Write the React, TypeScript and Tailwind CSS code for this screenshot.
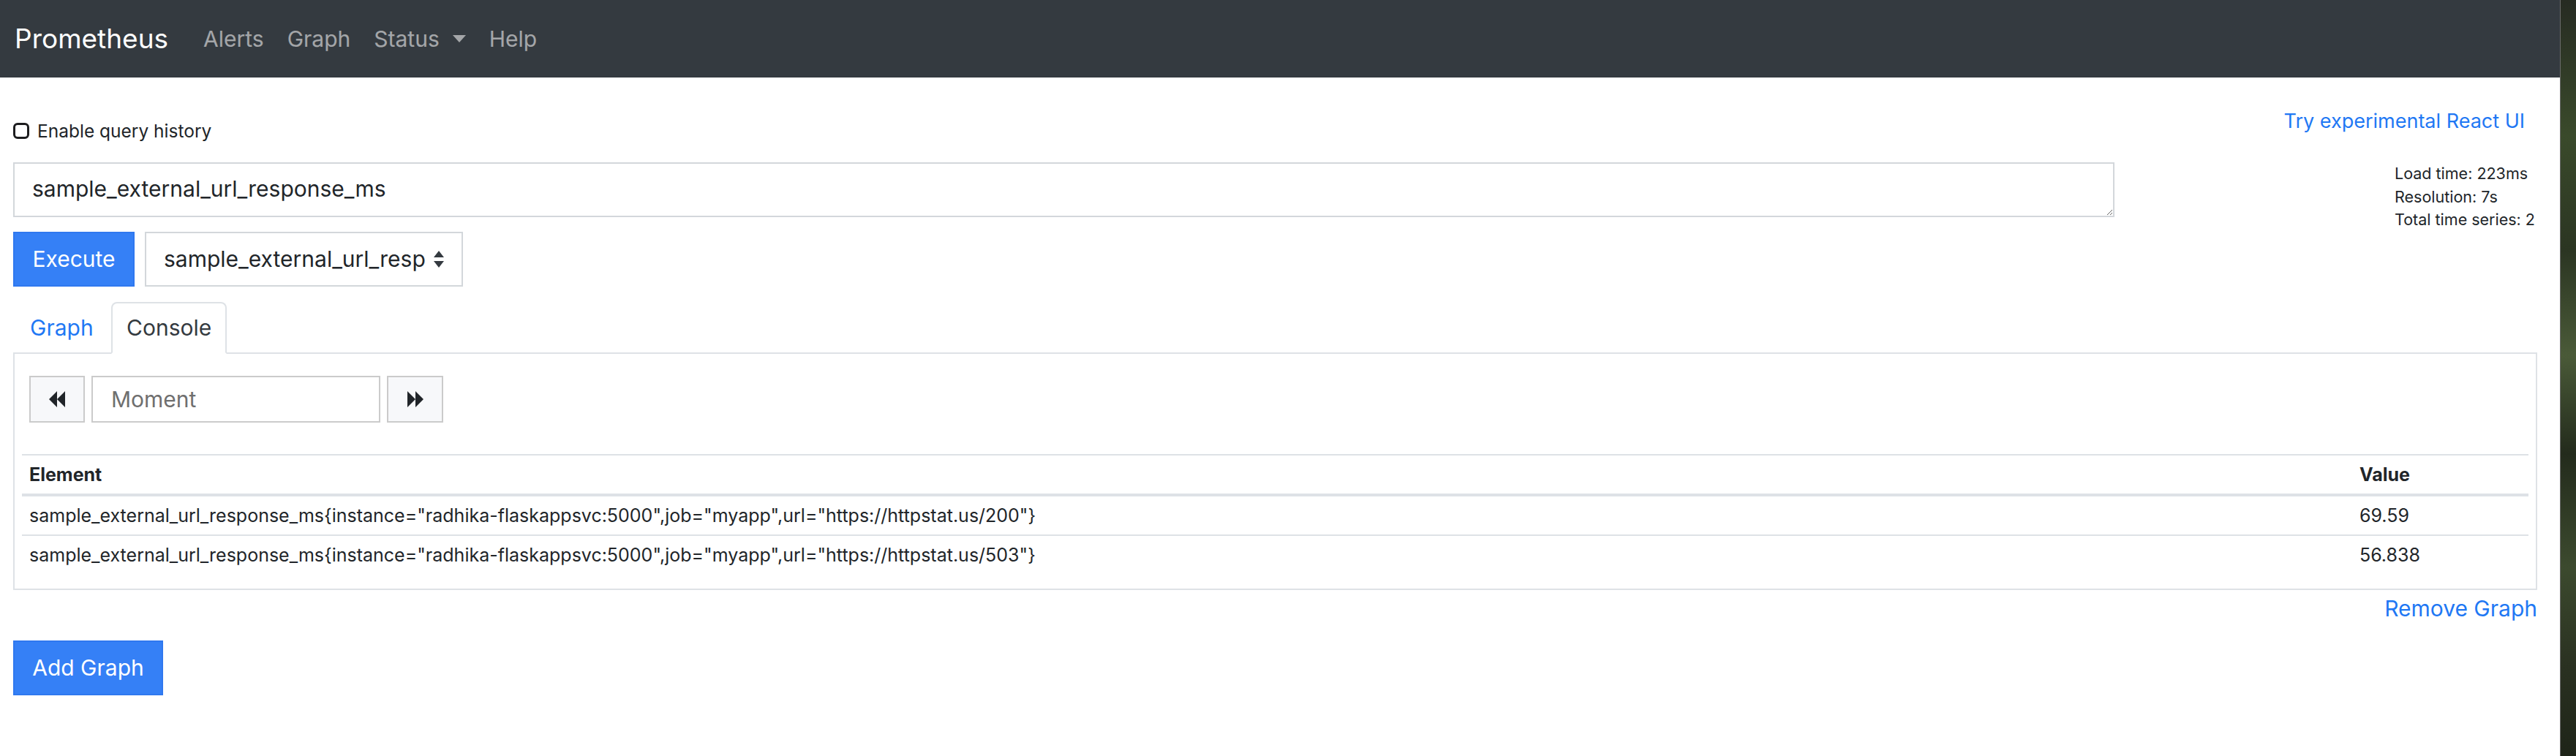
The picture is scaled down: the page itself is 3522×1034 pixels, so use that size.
import React from "react"

const FONT = "font-['Inter','Liberation_Sans',sans-serif]"

const rows = [
  {
    metric:
      'sample_external_url_response_ms{instance="radhika-flaskappsvc:5000",job="myapp",url="https://httpstat.us/200"}',
    value: "69.59",
  },
  {
    metric:
      'sample_external_url_response_ms{instance="radhika-flaskappsvc:5000",job="myapp",url="https://httpstat.us/503"}',
    value: "56.838",
  },
]

function Backward() {
  return (
    <svg width="24" height="22" viewBox="0 0 24 22" fill="#212529">
      <path d="M23 0 L23 22 L12 11 Z M12 0 L12 22 L1 11 Z" />
    </svg>
  )
}

function Forward() {
  return (
    <svg width="24" height="22" viewBox="0 0 24 22" fill="#212529">
      <path d="M1 0 L1 22 L12 11 Z M12 0 L12 22 L23 11 Z" />
    </svg>
  )
}

function Navbar() {
  return (
    <nav className="flex h-[106px] items-center bg-[#343a40] pl-[20px]">
      <span className="mr-[32px] text-[37px] leading-[54px] text-white">Prometheus</span>
      <div className="flex items-center text-[30px] leading-[45px] text-white/55">
        <span className="px-[16px]">Alerts</span>
        <span className="px-[16px]">Graph</span>
        <span className="flex items-center px-[16px]">
          Status
          <svg className="ml-[18px]" width="18" height="10" viewBox="0 0 18 10" fill="currentColor">
            <path d="M0 0 L18 0 L9 10 Z" />
          </svg>
        </span>
        <span className="px-[16px]">Help</span>
      </div>
    </nav>
  )
}

export default function App() {
  return (
    <div className={`flex h-[1034px] w-[3522px] bg-white text-[#212529] ${FONT}`}>
      <div className="flex w-[3500px] flex-col">
        <Navbar />

        <div className="pl-[18px] pr-[31px]">
          {/* top row */}
          <div className="flex items-start justify-between pt-[42px]">
            <label className="mt-[15px] flex items-center gap-[11px] text-[24.5px] leading-[32px]">
              <span className="h-[22px] w-[22px] rounded-[6px] border-[3px] border-[#1d1d1f] bg-white" />
              Enable query history
            </label>
            <a className="mr-[17px] text-[27px] leading-[36px] text-[#1f78f4]">Try experimental React UI</a>
          </div>

          {/* expression + stats */}
          <div className="mt-[27px] flex items-start">
            <div className="w-[2873px]">
              <textarea
                readOnly
                value="sample_external_url_response_ms"
                className="block h-[75px] w-full resize-y border-2 border-[#d3d7db] px-[24px] py-[12px] text-[30px] leading-[45px] text-[#212529] outline-none"
              />
              <div className="mt-[20px] flex gap-[14px]">
                <button className="h-[75px] w-[166px] border-2 border-[#2f78ef] bg-[#3580f6] text-[30px] text-white">
                  Execute
                </button>
                <div className="flex h-[75px] w-[435px] items-center border-2 border-[#d3d7db] pl-[24px] pr-[24px]">
                  <span className="whitespace-nowrap text-[30px] text-[#212529]">sample_external_url_resp</span>
                  <svg className="ml-auto" width="14" height="24" viewBox="0 0 14 24" fill="#343a40">
                    <path d="M7 0 L14 9 L0 9 Z M0 14 L14 14 L7 23 Z" />
                  </svg>
                </div>
              </div>
            </div>
            <div className="ml-[383px] whitespace-nowrap text-[21.5px] leading-[31.5px] text-[#212529]">
              <div>Load time: 223ms</div>
              <div>Resolution: 7s</div>
              <div>Total time series: 2</div>
            </div>
          </div>

          {/* tabs */}
          <div className="mt-[21px] flex h-[71px] items-end border-b-2 border-[#dee2e6]">
            <div className="mb-[-2px] flex h-[71px] w-[134px] items-center pl-[23px] text-[30px] leading-[45px] text-[#1f78f4]">
              Graph
            </div>
            <div className="mb-[-2px] flex h-[71px] items-center rounded-t-[8px] border-2 border-[#dee2e6] border-b-white bg-white px-[19px] text-[30px] leading-[45px] text-[#343a40]">
              Console
            </div>
          </div>

          {/* tab content */}
          <div className="border-x-2 border-b-2 border-[#dee2e6] px-[10px] pb-[20px] pt-[30px]">
            <div className="ml-[10px] flex h-[64px] gap-[9px]">
              <button className="flex w-[76px] items-center justify-center border-2 border-[#cbcbcb] bg-[#f7f8fa]">
                <Backward />
              </button>
              <div className="flex w-[395px] items-center border-2 border-[#cbcbcb] pl-[25px] text-[30px] text-[#6f6f6f]">
                Moment
              </div>
              <button className="flex w-[77px] items-center justify-center border-2 border-[#cbcbcb] bg-[#f7f8fa]">
                <Forward />
              </button>
            </div>

            <table className="mt-[43px] w-full border-collapse text-[25px] leading-[36px]">
              <thead>
                <tr className="border-y-2 border-[#dee2e6]">
                  <th className="border-b-4 border-[#dee2e6] px-[10px] py-[8px] text-left font-bold">Element</th>
                  <th className="w-[241px] border-b-4 border-[#dee2e6] px-[10px] py-[8px] text-left font-bold">
                    Value
                  </th>
                </tr>
              </thead>
              <tbody>
                {rows.map((r, i) => (
                  <tr key={r.value} className={i === 0 ? "border-b-2 border-[#dee2e6]" : ""}>
                    <td className="px-[10px] py-[8px]">{r.metric}</td>
                    <td className="px-[10px] py-[8px]">{r.value}</td>
                  </tr>
                ))}
              </tbody>
            </table>
          </div>

          <div className="mt-[3px] flex justify-end">
            <a className="text-[30px] leading-[45px] text-[#1f78f4]">Remove Graph</a>
          </div>

          <button className="mt-[21px] h-[75px] w-[205px] border-2 border-[#2f78ef] bg-[#3580f6] text-[30px] text-white">
            Add Graph
          </button>
        </div>
      </div>

      {/* desktop showing at the right edge */}
      <div className="w-[22px] border-l border-[#6b6b6b] bg-[linear-gradient(180deg,#262b22_0%,#3a4a2b_18%,#2b3522_33%,#4a5a38_47%,#232b1c_60%,#3c4a2e_75%,#2a3121_88%,#1e2418_100%)]" />
    </div>
  )
}
